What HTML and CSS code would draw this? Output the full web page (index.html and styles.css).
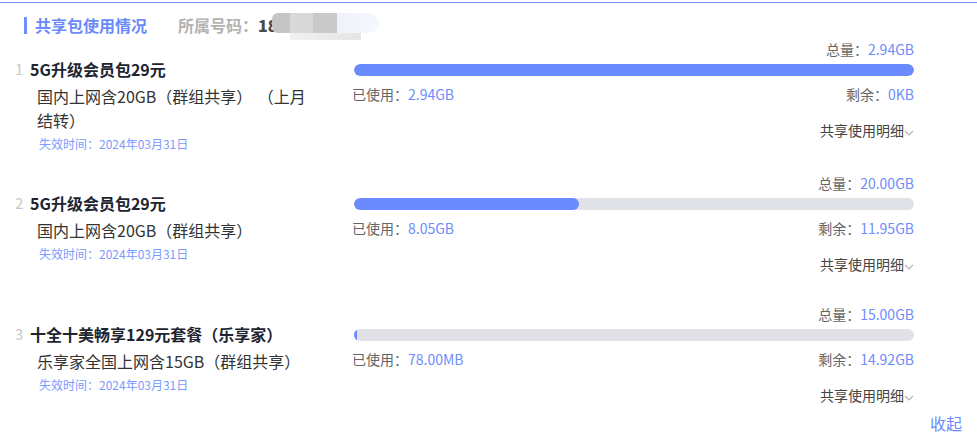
FILE: index.html
```html
<!DOCTYPE html>
<html lang="zh-CN">
<head>
<meta charset="utf-8">
<title>共享包使用情况</title>
<link rel="stylesheet" href="styles.css">
</head>
<body>
<div class="page">
  <div class="header">
    <span class="header-bar"></span>
    <span class="header-title">共享包使用情况</span>
    <span class="header-phone">所属号码：<b class="phone-num">18</b></span>
    <span class="blur">
      <span class="blur-a"></span><span class="blur-b"></span><span class="blur-c"></span><span class="blur-d"></span>
      <span class="blur-low"></span>
    </span>
  </div>

  <div class="list">
    <div class="item">
      <div class="left">
        <div class="title-row"><span class="num">1</span><span class="title">5G升级会员包29元</span></div>
        <div class="desc">国内上网含20GB（群组共享）&#8196;（上月结转）</div>
        <div class="expire">失效时间：2024年03月31日</div>
      </div>
      <div class="right">
        <div class="total"><span class="label">总量：</span><span class="val">2.94GB</span></div>
        <div class="track"><div class="fill" style="width:100%"></div></div>
        <div class="stats"><span><span class="label">已使用：</span><span class="val">2.94GB</span></span><span><span class="label">剩余：</span><span class="val">0KB</span></span></div>
        <div class="detail"><span>共享使用明细</span><svg class="chev" viewBox="0 0 10 6" width="10" height="6"><polyline points="1,1 5,5 9,1" fill="none" stroke="#b4b4b4" stroke-width="1.2"/></svg></div>
      </div>
    </div>

    <div class="item">
      <div class="left">
        <div class="title-row"><span class="num">2</span><span class="title">5G升级会员包29元</span></div>
        <div class="desc">国内上网含20GB（群组共享）</div>
        <div class="expire">失效时间：2024年03月31日</div>
      </div>
      <div class="right">
        <div class="total"><span class="label">总量：</span><span class="val">20.00GB</span></div>
        <div class="track"><div class="fill" style="width:40.25%"></div></div>
        <div class="stats"><span><span class="label">已使用：</span><span class="val">8.05GB</span></span><span><span class="label">剩余：</span><span class="val">11.95GB</span></span></div>
        <div class="detail"><span>共享使用明细</span><svg class="chev" viewBox="0 0 10 6" width="10" height="6"><polyline points="1,1 5,5 9,1" fill="none" stroke="#b4b4b4" stroke-width="1.2"/></svg></div>
      </div>
    </div>

    <div class="item">
      <div class="left">
        <div class="title-row"><span class="num">3</span><span class="title">十全十美畅享129元套餐（乐享家）</span></div>
        <div class="desc">乐享家全国上网含15GB（群组共享）</div>
        <div class="expire">失效时间：2024年03月31日</div>
      </div>
      <div class="right">
        <div class="total"><span class="label">总量：</span><span class="val">15.00GB</span></div>
        <div class="track"><div class="fill fill-min" style="width:0.51%"></div></div>
        <div class="stats"><span><span class="label">已使用：</span><span class="val">78.00MB</span></span><span><span class="label">剩余：</span><span class="val">14.92GB</span></span></div>
        <div class="detail"><span>共享使用明细</span><svg class="chev" viewBox="0 0 10 6" width="10" height="6"><polyline points="1,1 5,5 9,1" fill="none" stroke="#b4b4b4" stroke-width="1.2"/></svg></div>
      </div>
    </div>
  </div>

  <div class="collapse">收起</div>
</div>
</body>
</html>
```

FILE: styles.css
```css
html, body {
  margin: 0;
  padding: 0;
  background: #ffffff;
}
body {
  padding-top: 2px;
  font-family: "Noto Sans CJK SC", "Noto Sans", sans-serif;
  color: #333333;
}
.page {
  width: 977px;
  border-top: 1px solid #7491ff;
  overflow: hidden;
}

/* header */
.header {
  display: flex;
  align-items: center;
  height: 22px;
  margin-top: 11px;
  margin-bottom: 3px;
  padding-left: 24px;
}
.header-bar {
  width: 3px;
  height: 17px;
  background: #6f8ffd;
  margin-right: 8px;
}
.header-title {
  font-size: 16px;
  line-height: 22px;
  font-weight: 700;
  color: #6a8afc;
}
.header-phone {
  margin-left: 31px;
  font-size: 16px;
  line-height: 22px;
  font-weight: 700;
  color: #b3b3b3;
}
.phone-num {
  color: #4a4a4a;
}
.blur {
  position: relative;
  display: flex;
  align-self: flex-start;
  margin-top: -1px;
  height: 20px;
  margin-left: -6px;
}
.blur-a, .blur-b, .blur-c, .blur-d {
  display: block;
  height: 20px;
}
.blur-a { width: 18px; background: #c5c5c5; border-radius: 6px 0 0 6px; }
.blur-b { width: 23px; background: #d9d9d9; }
.blur-c { width: 24px; background: #c9c9c9; }
.blur-d { width: 42px; background: linear-gradient(90deg, #eef2fb, #f6f8fe); border-radius: 0 12px 12px 0; }
.blur-low {
  position: absolute;
  left: 18px;
  top: 20px;
  width: 71px;
  height: 7px;
  background: linear-gradient(90deg, #f2f2f2, #e4e4e4);
}

/* items */
.item {
  display: flex;
  align-items: flex-start;
  padding-left: 14px;
  padding-bottom: 30px;
}
.item:last-child {
  padding-bottom: 7px;
}
.left {
  width: 338px;
  padding-top: 19px;
  margin-bottom: -11px;
}
.title-row {
  display: flex;
  align-items: center;
  height: 22px;
}
.num {
  width: 16px;
  padding-left: 1px;
  box-sizing: border-box;
  font-size: 15px;
  line-height: 22px;
  color: #c9c9c9;
}
.title {
  font-size: 16px;
  line-height: 22px;
  font-weight: 700;
  color: #1e2430;
  white-space: nowrap;
}
.desc {
  width: 272px;
  margin-left: 23px;
  margin-top: 4px;
  font-size: 16px;
  line-height: 24px;
  color: #333333;
}
.expire {
  margin-left: 25px;
  margin-top: 2px;
  font-size: 12px;
  line-height: 20px;
  color: #7b9afe;
}

.right {
  width: 562px;
  font-size: 14px;
}
.total {
  height: 20px;
  line-height: 20px;
  text-align: right;
}
.label {
  color: #666666;
}
.val {
  color: #6d8dfd;
}
.track {
  margin-top: 5px;
  margin-left: 2px;
  height: 12px;
  border-radius: 6px;
  background: #e1e2e7;
  overflow: hidden;
}
.fill {
  height: 12px;
  border-radius: 6px;
  background: #6a8bff;
}
.fill-min {
  min-width: 3px;
  border-radius: 2px;
}
.stats {
  margin-top: 8px;
  height: 20px;
  line-height: 20px;
  display: flex;
  justify-content: space-between;
}
.detail {
  margin-top: 16px;
  height: 20px;
  line-height: 20px;
  display: flex;
  justify-content: flex-end;
  align-items: center;
  color: #444444;
}
.chev {
  margin-top: 5px;
}

.collapse {
  text-align: right;
  padding-right: 15px;
  font-size: 16px;
  line-height: 22px;
  color: #6a8afc;
}
```
